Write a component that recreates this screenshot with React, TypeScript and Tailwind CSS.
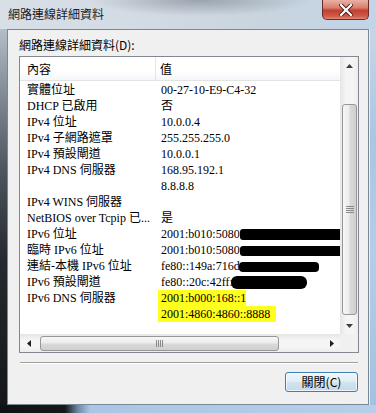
import React from "react";

const serif = "font-['Liberation_Serif','Noto_Sans_CJK_TC',serif]";
const sans = "font-['Noto_Sans_CJK_TC','Liberation_Sans',sans-serif]";

function Row({ label, children }: { label?: string; children?: React.ReactNode }) {
  return (
    <div className="flex h-[16px] leading-[16px] whitespace-nowrap text-[12px] text-black">
      <div className="w-[135px] shrink-0 pl-[7px] overflow-hidden">{label}</div>
      <div className="pl-[6px] flex items-center">{children}</div>
    </div>
  );
}

function UpArrow() {
  return (
    <svg width="7" height="4" viewBox="0 0 7 4">
      <polygon points="0,4 3.5,0 7,4" fill="#404040" />
    </svg>
  );
}
function DownArrow() {
  return (
    <svg width="7" height="4" viewBox="0 0 7 4">
      <polygon points="0,0 3.5,4 7,0" fill="#404040" />
    </svg>
  );
}
function LeftArrow() {
  return (
    <svg width="4" height="7" viewBox="0 0 4 7">
      <polygon points="4,0 0,3.5 4,7" fill="#202020" />
    </svg>
  );
}
function RightArrow() {
  return (
    <svg width="4" height="7" viewBox="0 0 4 7">
      <polygon points="0,0 4,3.5 0,7" fill="#202020" />
    </svg>
  );
}

export default function App() {
  return (
    <div className="w-[376px] h-[413px] flex flex-col overflow-hidden">
      {/* Title bar */}
      <div className="relative h-[29px] shrink-0 bg-[radial-gradient(ellipse_110px_16px_at_200px_0px,rgba(120,128,138,0.6),transparent),linear-gradient(90deg,#d8dfe7_0%,#d2dae3_40%,#c9d4df_70%,#c2d4e8_100%)]">
        <div className={`${sans} absolute left-[8px] top-[6px] text-[12px] leading-[16px] text-[#1a1a1a]`}>
          網路連線詳細資料
        </div>
        <div className="absolute top-0 right-[7px] w-[47px] h-[20px] rounded-b-[5px] border border-t-0 border-[#6b2a24] bg-[linear-gradient(180deg,#eab0a4_0%,#d9806f_40%,#c2402f_55%,#cf5a48_85%,#e08a78_100%)] flex items-center justify-center">
          <svg width="14" height="12" viewBox="0 0 14 12">
            <path d="M2 1 L12 11 M12 1 L2 11" stroke="#4a1a15" strokeWidth="4" strokeLinecap="square" />
            <path d="M2 1 L12 11 M12 1 L2 11" stroke="#ffffff" strokeWidth="2.2" strokeLinecap="square" />
          </svg>
        </div>
      </div>

      {/* Middle */}
      <div className="flex h-[376px] shrink-0">
        <div className="w-[7px] shrink-0 bg-[linear-gradient(180deg,#b4bec9_0px,#8c96a1_50px,#4e565f_140px,#262a30_230px,#141619_100%)]" />
        <div className="w-[362px] shrink-0 border border-[#7a8795] bg-[#f0f0f0] flex flex-col">
          <div className={`${sans} pl-[11px] pt-[7px] h-[23px] text-[12px] leading-[16px] text-black`}>
            網路連線詳細資料(D):
          </div>
          <div className="ml-[11px] mt-[3px] w-[340px] h-[297px] border border-[#828790] bg-white flex flex-col">
            <div className="flex h-[277px]">
              {/* list main */}
              <div className={`${serif} w-[320px] shrink-0 overflow-hidden`}>
                <div className={`${sans} relative flex h-[24px] items-center border-b border-[#e3e3e3] bg-[linear-gradient(180deg,#ffffff_0%,#ffffff_60%,#f4f6f9_100%)] text-[12px] text-black`}>
                  <div className="w-[135px] pl-[7px] pt-[1px]">內容</div>
                  <div className="w-px h-[23px] bg-[#e3e5e8]" />
                  <div className="pl-[4px] pt-[1px]">值</div>
                </div>
                <div className="pt-[1px]">
                  <Row label="實體位址">00-27-10-E9-C4-32</Row>
                  <Row label="DHCP 已啟用">否</Row>
                  <Row label="IPv4 位址">10.0.0.4</Row>
                  <Row label="IPv4 子網路遮罩">255.255.255.0</Row>
                  <Row label="IPv4 預設閘道">10.0.0.1</Row>
                  <Row label="IPv4 DNS 伺服器">168.95.192.1</Row>
                  <Row label="">8.8.8.8</Row>
                  <Row label="IPv4 WINS 伺服器"></Row>
                  <Row label="NetBIOS over Tcpip 已...">是</Row>
                  <Row label="IPv6 位址">
                    <span>2001:b010:5080:</span>
                    <span className="inline-block ml-[-3px] mt-[1px] w-[102px] h-[11px] bg-black rounded-[3px]" />
                  </Row>
                  <Row label="臨時 IPv6 位址">
                    <span>2001:b010:5080:</span>
                    <span className="inline-block ml-[-3px] mt-[2px] w-[102px] h-[10px] bg-black rounded-[3px]" />
                  </Row>
                  <Row label="連結-本機 IPv6 位址">
                    <span>fe80::149a:716d</span>
                    <span className="inline-block ml-[-1px] mt-[2px] w-[80px] h-[10px] bg-black rounded-[4px]" />
                  </Row>
                  <Row label="IPv6 預設閘道">
                    <span>fe80::20c:42ff:</span>
                    <span className="inline-block ml-[-2px] w-[76px] h-[13px] bg-black rounded-[6px]" />
                  </Row>
                  <Row label="IPv6 DNS 伺服器">
                    <span className="ml-[-3px] pl-[3px] bg-[#ffff1e]">2001:b000:168::1</span>
                  </Row>
                  <Row label="">
                    <span className="ml-[-3px] pl-[3px] pr-[6px] bg-[#ffff1e]">2001:4860:4860::8888</span>
                  </Row>
                </div>
              </div>
              {/* vertical scrollbar */}
              <div className="w-[18px] shrink-0 flex flex-col border-l border-[#e6e6e6] bg-[linear-gradient(90deg,#e8e8e8,#f5f5f5_30%,#f5f5f5_70%,#ececec)]">
                <div className="h-[17px] flex items-center justify-center">
                  <UpArrow />
                </div>
                <div className="h-[30px]" />
                <div className="mx-[1px] h-[211px] rounded-[3px] border border-[#979797] bg-[linear-gradient(90deg,#f7f7f7_0%,#ececec_45%,#d9d9d9_55%,#cfcfcf_100%)] flex items-center justify-center">
                  <div className="flex flex-col gap-[1px]">
                    <div className="w-[8px] h-px bg-[#8a8a8a]" />
                    <div className="w-[8px] h-px bg-[#8a8a8a]" />
                    <div className="w-[8px] h-px bg-[#8a8a8a]" />
                    <div className="w-[8px] h-px bg-[#8a8a8a]" />
                  </div>
                </div>
                <div className="h-[2px]" />
                <div className="h-[17px] flex items-center justify-center">
                  <DownArrow />
                </div>
              </div>
            </div>
            {/* horizontal scrollbar */}
            <div className="flex h-[18px]">
              <div className="w-[320px] shrink-0 flex border-t border-[#e6e6e6] bg-[linear-gradient(180deg,#e8e8e8,#f5f5f5_30%,#f5f5f5_70%,#ececec)]">
                <div className="w-[17px] flex items-center justify-center">
                  <LeftArrow />
                </div>
                <div className="ml-[3px] my-[1px] w-[239px] rounded-[3px] border border-[#979797] bg-[linear-gradient(180deg,#f7f7f7_0%,#ececec_45%,#d9d9d9_55%,#cfcfcf_100%)] flex items-center justify-center">
                  <div className="flex gap-[1px]">
                    <div className="w-px h-[7px] bg-[#8a8a8a]" />
                    <div className="w-px h-[7px] bg-[#8a8a8a]" />
                    <div className="w-px h-[7px] bg-[#8a8a8a]" />
                    <div className="w-px h-[7px] bg-[#8a8a8a]" />
                  </div>
                </div>
                <div className="flex-1" />
                <div className="w-[17px] flex items-center justify-center">
                  <RightArrow />
                </div>
              </div>
              <div className="w-[18px] shrink-0 bg-[#f0f0f0]" />
            </div>
          </div>
          {/* separator */}
          <div className="ml-[12px] mt-[9px] w-[338px] h-px bg-[#a0a0a0]" />
          <div className="ml-[12px] w-[338px] h-px bg-white" />
          {/* button */}
          <div className="flex justify-end pr-[10px] mt-[8px]">
            <div className={`${sans} w-[73px] h-[20px] rounded-[3px] border border-[#3c7fb1] bg-[linear-gradient(180deg,#eef6fb_0%,#e2eef6_45%,#cfe2ef_55%,#c4dbeb_100%)] shadow-[inset_0_0_0_1px_rgba(255,255,255,0.7)] flex items-center justify-center text-[12px] leading-[16px] text-black`}>
              關閉(C)
            </div>
          </div>
        </div>
        <div className="w-[7px] shrink-0 border-l border-[#e8f0f8] bg-[linear-gradient(180deg,#c6d6e6_0%,#aac6e4_30%,#b5cde8_60%,#a3c1e2_100%)]" />
      </div>

      {/* Bottom frame */}
      <div className="h-[8px] shrink-0 bg-[linear-gradient(90deg,#101113_0px,#15171a_65px,#6d89a8_78px,#a9c6e6_90px,#b6cfea_100%)]" />
    </div>
  );
}
